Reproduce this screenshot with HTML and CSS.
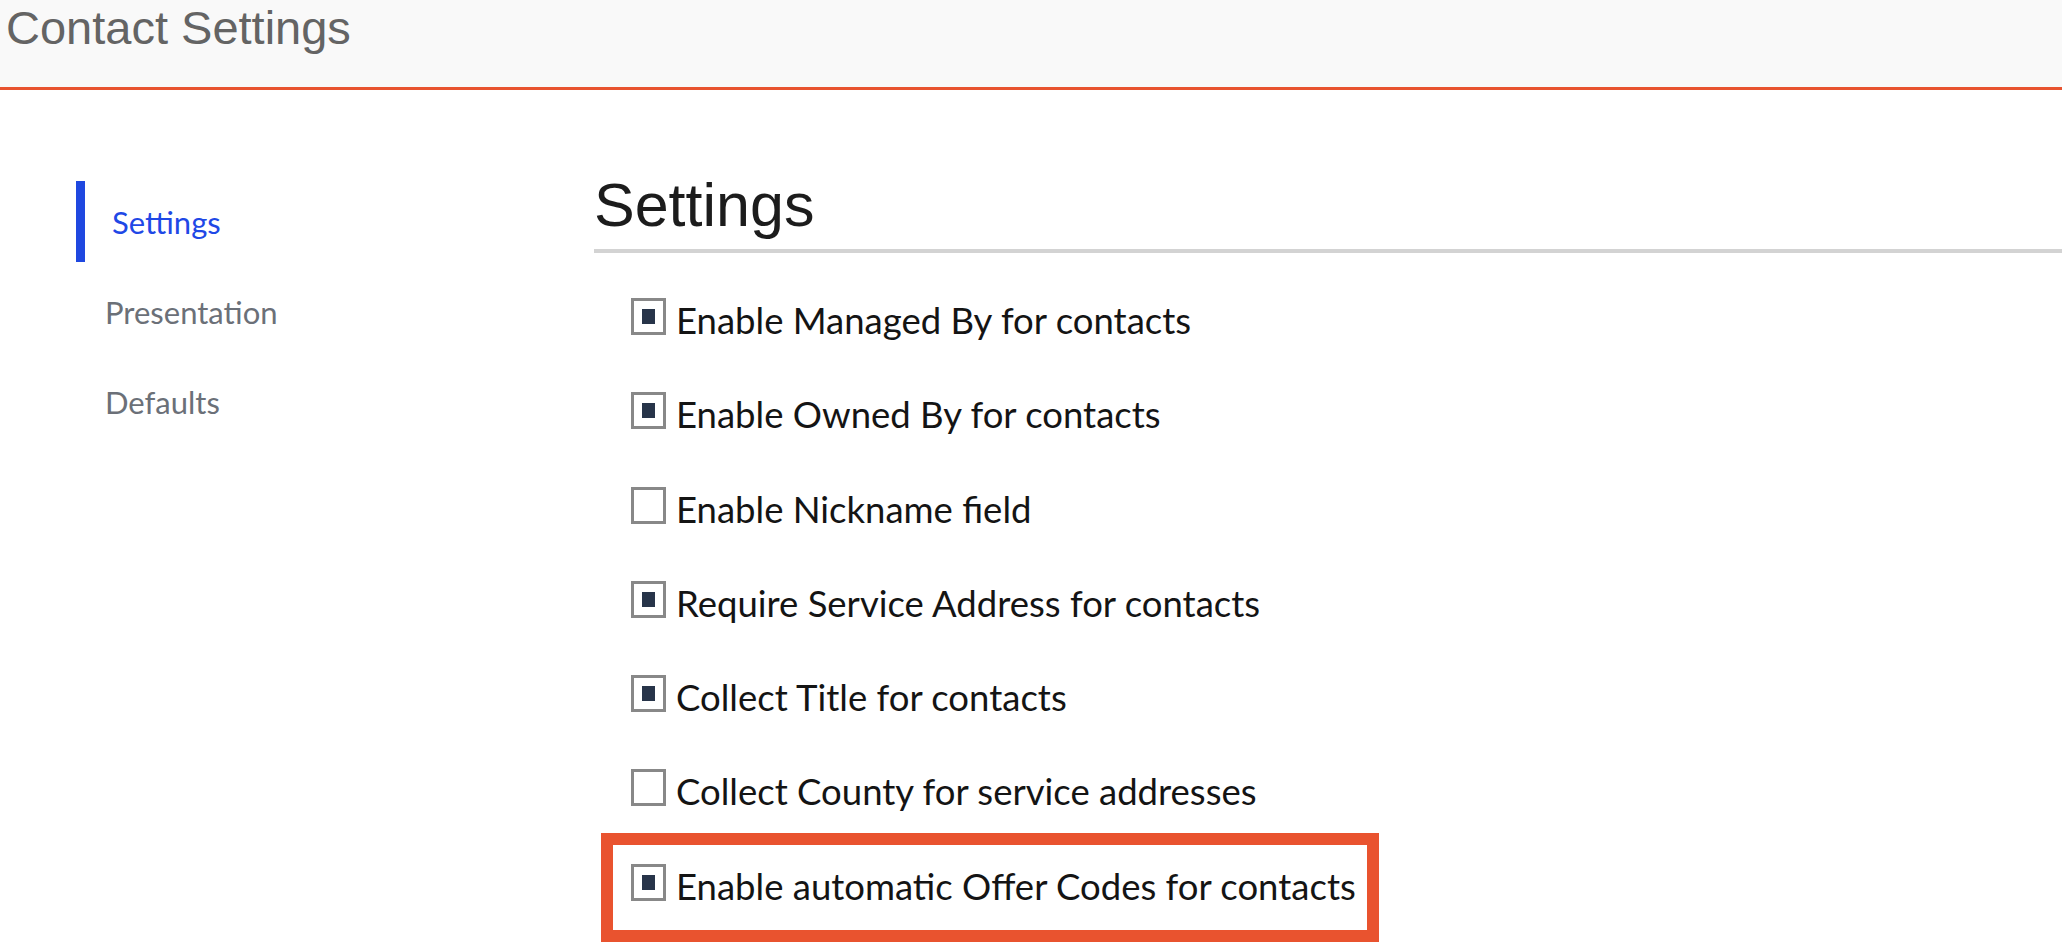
FILE: index.html
```html
<!DOCTYPE html>
<html lang="en">
<head>
<meta charset="utf-8">
<title>Contact Settings</title>
<link rel="stylesheet" href="styles.css">
</head>
<body>
<header class="topbar">
  <h1 class="page-title">Contact Settings</h1>
</header>
<div class="layout">
  <nav class="sidenav">
    <a class="nav-item active" href="#">Settings</a>
    <a class="nav-item" href="#">Presentation</a>
    <a class="nav-item" href="#">Defaults</a>
  </nav>
  <main class="content">
    <h2 class="section-title">Settings</h2>
    <ul class="options">
      <li class="option"><span class="box checked"></span>Enable Managed By for contacts</li>
      <li class="option"><span class="box checked"></span>Enable Owned By for contacts</li>
      <li class="option"><span class="box"></span>Enable Nickname field</li>
      <li class="option"><span class="box checked"></span>Require Service Address for contacts</li>
      <li class="option"><span class="box checked"></span>Collect Title for contacts</li>
      <li class="option"><span class="box"></span>Collect County for service addresses</li>
      <li class="option highlighted"><span class="box checked"></span>Enable automatic Offer Codes for contacts</li>
    </ul>
  </main>
</div>
</body>
</html>
```
FILE: styles.css
```css
html, body {
  margin: 0;
  padding: 0;
  background: #ffffff;
  height: 950px;
  overflow: hidden;
}

.topbar {
  height: 87px;
  background: #f9f9f9;
  border-bottom: 3px solid #e8532f;
  padding-left: 6px;
}

.page-title {
  margin: 0;
  font-family: "Liberation Sans", Arial, sans-serif;
  font-weight: 400;
  font-size: 47px;
  line-height: normal;
  color: #646464;
}

.layout {
  display: flex;
  align-items: flex-start;
  padding-top: 80px;
  padding-left: 76px;
}

.sidenav {
  width: 518px;
  flex: none;
  margin-top: 11px;
  display: flex;
  flex-direction: column;
}

.nav-item {
  display: flex;
  align-items: center;
  box-sizing: border-box;
  height: 81px;
  margin-bottom: 9px;
  padding-left: 29px;
  font-family: Lato, "Liberation Sans", sans-serif;
  font-size: 31px;
  color: #6b7078;
  text-decoration: none;
}

.nav-item.active {
  border-left: 9px solid #1f48e0;
  padding-left: 27px;
  color: #1f48e6;
}

.content {
  flex: 1;
}

.section-title {
  margin: 0;
  font-family: "Liberation Sans", Arial, sans-serif;
  font-weight: 400;
  font-size: 61px;
  line-height: normal;
  color: #1c1c1c;
  padding-bottom: 9px;
  border-bottom: 4px solid #d3d3d3;
}

.options {
  list-style: none;
  margin: 20px 0 0 0;
  padding: 0 0 0 37px;
}

.option {
  position: relative;
  height: 94.3px;
  line-height: 94.3px;
  font-family: Lato, "Liberation Sans", sans-serif;
  font-size: 36.5px;
  color: #141414;
  white-space: nowrap;
}

.box {
  display: inline-block;
  box-sizing: border-box;
  width: 35px;
  height: 37px;
  border: 3px solid #888888;
  background: #ffffff;
  margin-right: 10px;
  margin-bottom: -1px;
  vertical-align: baseline;
  position: relative;
}

.box.checked::before {
  content: "";
  position: absolute;
  left: 8px;
  top: 8px;
  width: 13px;
  height: 15px;
  background: #273449;
}

.option.highlighted::after {
  content: "";
  position: absolute;
  left: -30px;
  top: -6px;
  width: 778px;
  height: 109px;
  box-sizing: border-box;
  border: 12px solid #e9532f;
  pointer-events: none;
}
```
